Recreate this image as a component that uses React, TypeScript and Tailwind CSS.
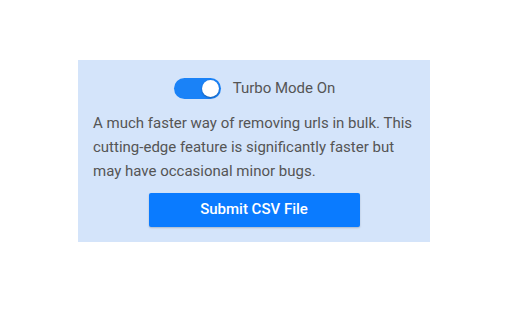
import React, { useState } from 'react';

export default function App() {
    const [turbo, setTurbo] = useState(true);

    return (
        <div className="w-[512px] h-[320px] bg-white flex justify-center pt-[60px]" style={{ fontFamily: 'Roboto, "Liberation Sans", sans-serif' }}>
            <div className="w-[352px] h-[182px] ml-[-4px] bg-[#d4e4fa] px-[15px] pt-[17px] flex flex-col items-center">
                {/* Toggle row */}
                <div className="flex items-center gap-[12px] ml-[1px]">
                    <button
                        onClick={() => setTurbo(!turbo)}
                        className={`relative w-[47px] h-[21px] rounded-full transition-colors ${turbo ? 'bg-[#1a82f7]' : 'bg-gray-400'}`}
                    >
                        <span className={`absolute top-[2px] w-[17px] h-[17px] rounded-full bg-white shadow-[0_1px_2px_rgba(0,0,0,0.3)] transition-all ${turbo ? 'left-[28px]' : 'left-[2px]'}`}></span>
                    </button>
                    <span className="text-[15px] text-[#555]">Turbo Mode {turbo ? 'On' : 'Off'}</span>
                </div>

                {/* Description */}
                <p className="mt-[11px] text-[15px] leading-[24px] text-[#555] self-start">
                    A much faster way of removing urls in bulk. This cutting-edge feature is significantly faster but may have occasional minor bugs.
                </p>

                {/* Submit */}
                <button className="mt-[10px] w-[211px] h-[34px] rounded-[2px] bg-[#0a7bff] text-white text-[15px] font-medium shadow-[0_1px_2px_rgba(0,0,0,0.2)]">
                    Submit CSV File
                </button>
            </div>
        </div>
    );
}
